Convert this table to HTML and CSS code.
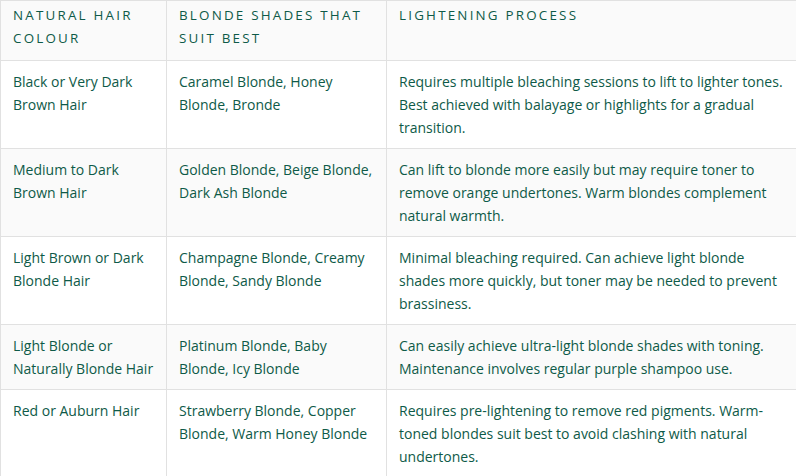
FILE: index.html
```html
<!DOCTYPE html>
<html>
<head>
<meta charset="utf-8">
<link rel="stylesheet" href="styles.css">
</head>
<body>
<table class="shades">
  <colgroup>
    <col class="c1"><col class="c2"><col class="c3">
  </colgroup>
  <thead>
    <tr>
      <th>Natural Hair Colour</th>
      <th>Blonde Shades That Suit Best</th>
      <th>Lightening Process</th>
    </tr>
  </thead>
  <tbody>
    <tr>
      <td>Black or Very Dark Brown Hair</td>
      <td>Caramel Blonde, Honey Blonde, Bronde</td>
      <td>Requires multiple bleaching sessions to lift to lighter tones. Best achieved with balayage or highlights for a gradual transition.</td>
    </tr>
    <tr class="alt">
      <td>Medium to Dark Brown Hair</td>
      <td>Golden Blonde, Beige Blonde, Dark Ash Blonde</td>
      <td>Can lift to blonde more easily but may require toner to remove orange undertones. Warm blondes complement natural warmth.</td>
    </tr>
    <tr>
      <td>Light Brown or Dark Blonde Hair</td>
      <td>Champagne Blonde, Creamy Blonde, Sandy Blonde</td>
      <td>Minimal bleaching required. Can achieve light blonde shades more quickly, but toner may be needed to prevent brassiness.</td>
    </tr>
    <tr class="alt">
      <td>Light Blonde or Naturally Blonde Hair</td>
      <td>Platinum Blonde, Baby Blonde, Icy Blonde</td>
      <td>Can easily achieve ultra-light blonde shades with toning. Maintenance involves regular purple shampoo use.</td>
    </tr>
    <tr>
      <td>Red or Auburn Hair</td>
      <td>Strawberry Blonde, Copper Blonde, Warm Honey Blonde</td>
      <td>Requires pre-lightening to remove red pigments. Warm-toned blondes suit best to avoid clashing with natural undertones.</td>
    </tr>
  </tbody>
</table>
</body>
</html>
```

FILE: styles.css
```css
html, body {
  margin: 0;
  padding: 0;
  background: #ffffff;
}
.shades {
  border-collapse: collapse;
  table-layout: fixed;
  width: 797px;
  font-family: "Open Sans", "Liberation Sans", sans-serif;
  color: #0e5a48;
  font-size: 14px;
  line-height: 23px;
}
.c1 { width: 166px; }
.c2 { width: 220px; }
.c3 { width: 411px; }
.shades th,
.shades td {
  border: 1px solid #e1e1e1;
  padding: 9px 12px 9px 12px;
  text-align: left;
  vertical-align: top;
}
.shades th {
  background: #fafafa;
  font-weight: 500;
  text-transform: uppercase;
  letter-spacing: 2.2px;
  font-size: 13.4px;
  padding-top: 3px;
  padding-bottom: 10px;
}
.shades td {
  font-weight: 500;
}
.shades tr.alt td {
  background: #fafafa;
}
```
